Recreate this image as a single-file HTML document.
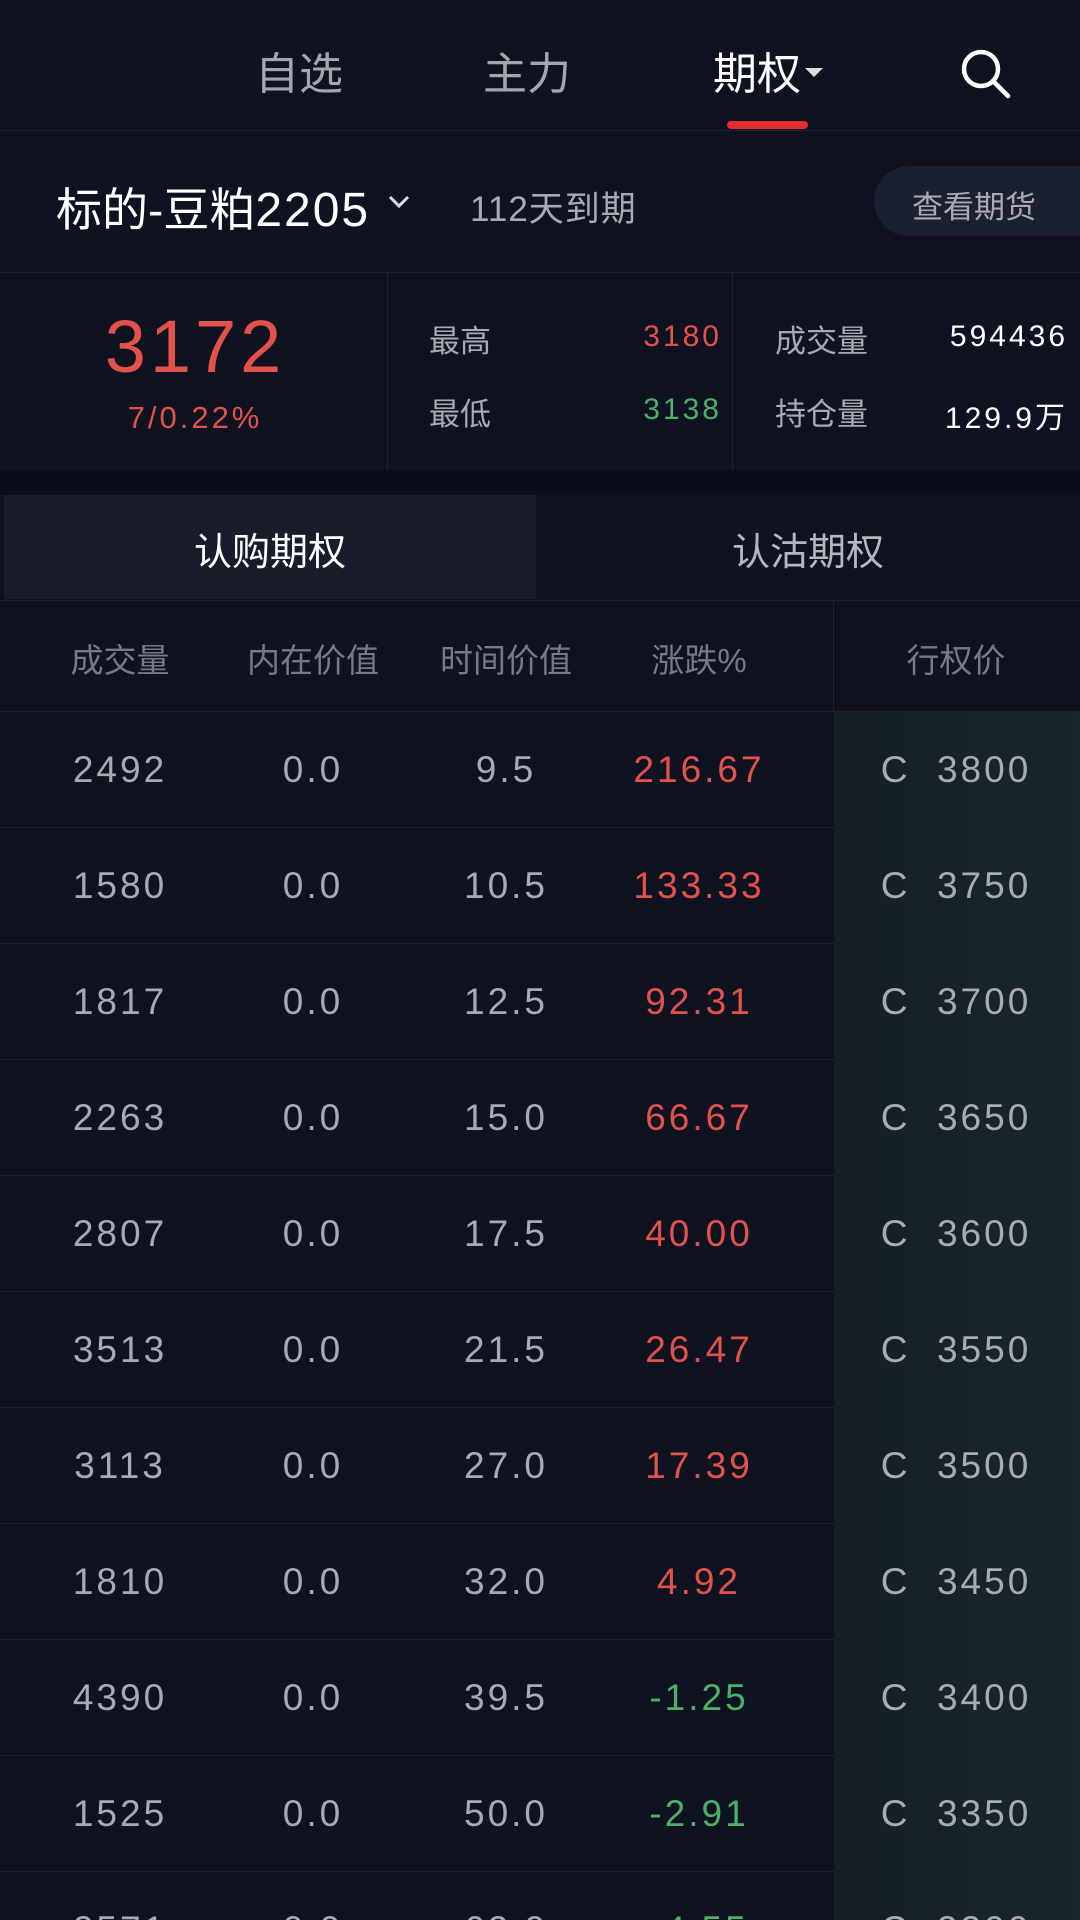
<!DOCTYPE html>
<html><head><meta charset="utf-8"><style>
*{margin:0;padding:0;box-sizing:border-box}
html{width:1080px;height:1920px;overflow:hidden}
body{width:1080px;height:1920px;overflow:hidden;background:#0f1220;font-family:"Liberation Sans","Noto Sans CJK SC",sans-serif;position:relative;color:#a8aab2}
.a{position:absolute;white-space:nowrap}
.c{transform:translateX(-50%)}
.r{transform:translateX(-100%)}
.num{font-family:"Liberation Sans",sans-serif;letter-spacing:3px}
.red{color:#e3514b}.grn{color:#4cb067}
.hl{position:absolute;left:0;width:1080px;height:1px;background:#1f2333}
</style></head><body>
<div class="a c" style="left:299px;top:38px;font-size:44px;color:#a4a6ae">自选</div>
<div class="a c" style="left:527px;top:38px;font-size:44px;color:#a4a6ae">主力</div>
<div class="a c" style="left:768px;top:38px;font-size:44px;color:#fff">期权<span style="display:inline-block;width:0;height:0;border-left:9px solid transparent;border-right:9px solid transparent;border-top:9px solid #ddd;vertical-align:middle;margin-left:4px;margin-top:-10px"></span></div>
<div style="position:absolute;left:727px;top:121px;width:81px;height:8px;border-radius:4px;background:#e12d2d"></div>
<svg class="a" style="left:958px;top:46px" width="56" height="56" viewBox="0 0 56 56"><circle cx="23" cy="23" r="17" fill="none" stroke="#fff" stroke-width="4.5"/><line x1="35" y1="35" x2="50" y2="50" stroke="#fff" stroke-width="4.5" stroke-linecap="round"/></svg>
<div class="hl" style="top:130px"></div>

<div class="a" style="left:56px;top:174px;font-size:46px;color:#fff">标的-豆粕<span style="font-size:48px;letter-spacing:2px">2205</span></div>
<svg class="a" style="left:386px;top:192px" width="26" height="20" viewBox="0 0 26 20"><path d="M4 5 L13 14 L22 5" fill="none" stroke="#ddd" stroke-width="3"/></svg>
<div class="a" style="left:470px;top:181px;font-size:35px;color:#a8aab2;letter-spacing:1px">112天到期</div>
<div style="position:absolute;left:874px;top:166px;width:240px;height:70px;border-radius:35px;background:#1b2030"></div>
<div class="a" style="left:912px;top:182px;font-size:31px;color:#a8aab2">查看期货</div>
<div class="hl" style="top:272px"></div>

<div style="position:absolute;left:387px;top:273px;width:1px;height:197px;background:#1f2333"></div>
<div style="position:absolute;left:732px;top:273px;width:1px;height:197px;background:#1f2333"></div>
<div class="a c red" style="left:195px;top:304px;font-size:74px;letter-spacing:4px">3172</div>
<div class="a c red num" style="left:195px;top:400px;font-size:31px">7/0.22%</div>
<div class="a" style="left:429px;top:316px;font-size:31px">最高</div>
<div class="a r red num" style="left:722px;top:320px;font-size:30px">3180</div>
<div class="a" style="left:429px;top:389px;font-size:31px">最低</div>
<div class="a r grn num" style="left:722px;top:393px;font-size:30px">3138</div>
<div class="a" style="left:775px;top:316px;font-size:31px">成交量</div>
<div class="a r num" style="left:1068px;top:320px;font-size:30px;color:#fff">594436</div>
<div class="a" style="left:775px;top:389px;font-size:31px">持仓量</div>
<div class="a r num" style="left:1068px;top:393px;font-size:30px;color:#fff">129.9万</div>

<div style="position:absolute;left:0;top:470px;width:1080px;height:25px;background:#0a0d17"></div>
<div style="position:absolute;left:4px;top:495px;width:532px;height:104px;background:#181c2b"></div>
<div class="a c" style="left:270px;top:521px;font-size:38px;color:#fff">认购期权</div>
<div class="a c" style="left:808px;top:521px;font-size:38px;color:#b5b7be">认沽期权</div>
<div class="hl" style="top:600px"></div>

<div style="position:absolute;left:833px;top:601px;width:1px;height:110px;background:#1f2333"></div>
<div style="position:absolute;left:834px;top:711px;width:246px;height:1209px;background:linear-gradient(90deg,#151f26,#18272a)"></div>
<div class="a c" style="left:120px;top:634px;font-size:33px;color:#777a84">成交量</div>
<div class="a c" style="left:313px;top:634px;font-size:33px;color:#777a84">内在价值</div>
<div class="a c" style="left:506px;top:634px;font-size:33px;color:#777a84">时间价值</div>
<div class="a c" style="left:699px;top:634px;font-size:33px;color:#777a84">涨跌%</div>
<div class="a c" style="left:956px;top:634px;font-size:33px;color:#777a84">行权价</div>
<div class="hl" style="top:711px"></div>

<div id="rows"></div>
<script>
var d=[["2492","0.0","9.5","216.67","3800"],["1580","0.0","10.5","133.33","3750"],["1817","0.0","12.5","92.31","3700"],["2263","0.0","15.0","66.67","3650"],["2807","0.0","17.5","40.00","3600"],["3513","0.0","21.5","26.47","3550"],["3113","0.0","27.0","17.39","3500"],["1810","0.0","32.0","4.92","3450"],["4390","0.0","39.5","-1.25","3400"],["1525","0.0","50.0","-2.91","3350"],["2571","0.0","62.0","-4.55","3300"]];
var h="";
d.forEach(function(r,i){var t=711+116*i;var y=t+38;
if(i>0)h+='<div class="hl" style="top:'+t+'px;width:834px"></div>';
var cl=r[3][0]=="-"?"grn":"red";
h+='<div class="a c num" style="left:120px;top:'+y+'px;font-size:37px">'+r[0]+'</div>';
h+='<div class="a c num" style="left:313px;top:'+y+'px;font-size:37px">'+r[1]+'</div>';
h+='<div class="a c num" style="left:506px;top:'+y+'px;font-size:37px">'+r[2]+'</div>';
h+='<div class="a c num '+cl+'" style="left:699px;top:'+y+'px;font-size:37px">'+r[3]+'</div>';
h+='<div class="a c num" style="left:956px;top:'+y+'px;font-size:37px;color:#a8acb0">C&nbsp; '+r[4]+'</div>';});
document.getElementById("rows").innerHTML=h;
</script>
</body></html>
